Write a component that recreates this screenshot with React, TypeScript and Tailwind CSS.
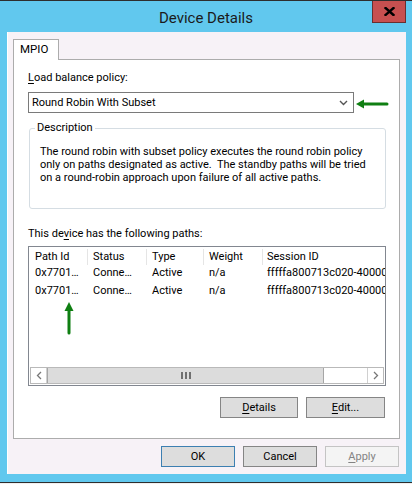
import React from "react";

function Btn({
  children,
  w = "w-[74px]",
  variant = "normal",
}: {
  children: React.ReactNode;
  w?: string;
  variant?: "normal" | "default" | "disabled";
}) {
  const cls =
    variant === "default"
      ? "bg-[#dddddd] border-[#3c7fb1] text-black"
      : variant === "disabled"
      ? "bg-[#f4f4f4] border-[#c4c4c4] text-[#838383]"
      : "bg-[#dddddd] border-[#858585] text-black";
  return (
    <div
      className={`${w} h-[21px] border ${cls} flex items-center justify-center leading-[16px]`}
    >
      {children}
    </div>
  );
}

export default function App() {
  const rows = [
    ["0x7701…", "Conne…", "Active", "n/a", "fffffa800713c020-40000000000000"],
    ["0x7701…", "Conne…", "Active", "n/a", "fffffa800713c020-40000000000000"],
  ];
  const cols = [
    { w: "w-[59px]", pl: "pl-[6px]" },
    { w: "w-[59px]", pl: "pl-[5px]" },
    { w: "w-[57px]", pl: "pl-[5px]" },
    { w: "w-[59px]", pl: "pl-[5px]" },
    { w: "flex-1", pl: "pl-[4px]" },
  ];
  const headers = ["Path Id", "Status", "Type", "Weight", "Session ID"];

  return (
    <div className="w-[412px] h-[484px] bg-[#61c8ee] flex flex-col overflow-hidden relative font-['Roboto',sans-serif] text-[11px] text-black">
      <div className="h-px bg-[#2e2e2e] shrink-0" />
      {/* Title bar */}
      <div className="h-[31px] shrink-0 relative flex items-center justify-center">
        <span className="text-[15px] text-[#1b1b1b] pt-[3px] leading-[20px]">
          Device Details
        </span>
        <div className="absolute right-[6px] top-0 w-[34px] h-[22px] bg-[#c75050] border border-t-0 border-[#6a2f2f] flex items-center justify-center">
          <svg width="11" height="9" viewBox="0 0 11 9">
            <path d="M1.5 1 L9.5 8 M9.5 1 L1.5 8" stroke="#000" strokeWidth="2.4" strokeLinecap="square" />
          </svg>
        </div>
      </div>

      {/* Client area */}
      <div className="ml-[7px] mr-[6px] h-[442px] shrink-0 bg-[#f7f2f7] flex flex-col pl-[6px] pr-[6px] pt-[7px] border-l border-white">
        {/* Tab strip */}
        <div className="flex h-[21px] -mb-px relative z-10 -ml-px">
          <div className="w-[46px] h-[21px] border border-b-0 border-[#acacac] bg-white pl-[6px] pt-[1px] leading-[16px] text-[11.5px]">
            MPIO
          </div>
        </div>
        {/* Tab page */}
        <div className="h-[380px] -ml-px border border-[#acacac] bg-white flex flex-col pl-[14px] pr-[13px] pt-[10px]">
          <div className="leading-[16px] h-[16px]">
            <span className="underline underline-offset-2">L</span>oad balance policy:
          </div>
          {/* Combo */}
          <div className="mt-[6px] w-[326px] h-[21px] border border-[#7a7a7a] bg-white flex items-center justify-between pl-[3px] pr-[5px]">
            <span className="leading-[16px]">Round Robin With Subset</span>
            <svg width="9" height="6" viewBox="0 0 9 6">
              <path d="M1 1 L4.5 4.5 L8 1" fill="none" stroke="#555" strokeWidth="1.4" />
            </svg>
          </div>
          {/* Group box */}
          <div className="mt-[15px] ml-px w-[357px] h-[81px] border border-[#d5dde3] rounded-[3px] relative pl-[10px] pt-[16px]">
            <span className="absolute -top-[9px] left-[5px] bg-white px-[2px] leading-[16px]">
              Description
            </span>
            <p className="leading-[13px] whitespace-nowrap">
              The round robin with subset policy executes the round robin policy
              <br />
              only on paths designated as active.&nbsp; The standby paths will be tried
              <br />
              on a round-robin approach upon failure of all active paths.
            </p>
          </div>
          <div className="mt-[17px] leading-[16px] h-[16px]">
            This de<span className="underline underline-offset-2">v</span>ice has the following paths:
          </div>
          {/* List view */}
          <div className="mt-[4px] w-[358px] h-[140px] border border-[#828790] bg-white flex flex-col overflow-hidden">
            <div className="flex h-[17px] shrink-0 pt-[2px]">
              {headers.map((h, i) => (
                <div
                  key={h}
                  className={`${cols[i].w} ${cols[i].pl} ${i < 4 ? "border-r border-[#e5e5e5]" : ""} h-[16px] leading-[16px] whitespace-nowrap overflow-hidden`}
                >
                  {h}
                </div>
              ))}
            </div>
            <div className="flex-1 flex flex-col">
              {rows.map((r, ri) => (
                <div key={ri} className="flex h-[18px] items-center">
                  {r.map((c, ci) => (
                    <div
                      key={ci}
                      className={`${cols[ci].w} ${cols[ci].pl} ${ci < 4 ? "border-r border-transparent" : ""} whitespace-nowrap overflow-hidden leading-[16px]`}
                    >
                      {c}
                    </div>
                  ))}
                </div>
              ))}
            </div>
            {/* Scrollbar */}
            <div className="mx-px mb-px h-[17px] shrink-0 border border-[#b9b9b9] bg-white flex">
              <div className="w-[16px] border-r border-[#d0d0d0] flex items-center justify-center">
                <svg width="6" height="9" viewBox="0 0 6 9">
                  <path d="M5 1 L1.5 4.5 L5 8" fill="none" stroke="#777" strokeWidth="1.3" />
                </svg>
              </div>
              <div className="w-[277px] bg-[#dcdcdc] border-x border-[#a6a6a6] flex items-center justify-center gap-[2px]">
                <div className="w-[2px] h-[7px] bg-[#6f6f6f]" />
                <div className="w-[2px] h-[7px] bg-[#6f6f6f]" />
                <div className="w-[2px] h-[7px] bg-[#6f6f6f]" />
              </div>
              <div className="flex-1" />
              <div className="w-[16px] border-l border-[#d0d0d0] flex items-center justify-center">
                <svg width="6" height="9" viewBox="0 0 6 9">
                  <path d="M1 1 L4.5 4.5 L1 8" fill="none" stroke="#777" strokeWidth="1.3" />
                </svg>
              </div>
            </div>
          </div>
          {/* Details / Edit */}
          <div className="mt-[11px] flex justify-end gap-[8px] pr-px">
            <Btn w="w-[78px]">
              <span>
                <span className="underline underline-offset-2">D</span>etails
              </span>
            </Btn>
            <Btn w="w-[79px]">
              <span>
                <span className="underline underline-offset-2">E</span>dit...
              </span>
            </Btn>
          </div>
        </div>
        {/* OK / Cancel / Apply */}
        <div className="mt-[7px] flex justify-end gap-[8px] pr-px">
          <Btn variant="default">OK</Btn>
          <Btn>Cancel</Btn>
          <Btn variant="disabled">
            <span>
              <span className="underline underline-offset-2">A</span>pply
            </span>
          </Btn>
        </div>
      </div>
      <div className="flex-1" />
      <div className="h-px bg-[#2e2e2e] shrink-0" />
      <div className="h-px bg-[#f0f0f0] shrink-0" />

      {/* Annotation arrows */}
      <svg className="absolute left-[354px] top-[98px]" width="36" height="12" viewBox="0 0 36 12">
        <path d="M8 6 L33 6" stroke="#0f7f12" strokeWidth="3" strokeLinecap="round" />
        <path d="M2 6 L10 1.5 L10 10.5 Z" fill="#0f7f12" />
      </svg>
      <svg className="absolute left-[63px] top-[300px]" width="12" height="36" viewBox="0 0 12 36">
        <path d="M6 10 L6 33" stroke="#0f7f12" strokeWidth="3" strokeLinecap="round" />
        <path d="M6 2 L1.5 11 L10.5 11 Z" fill="#0f7f12" />
      </svg>
    </div>
  );
}
